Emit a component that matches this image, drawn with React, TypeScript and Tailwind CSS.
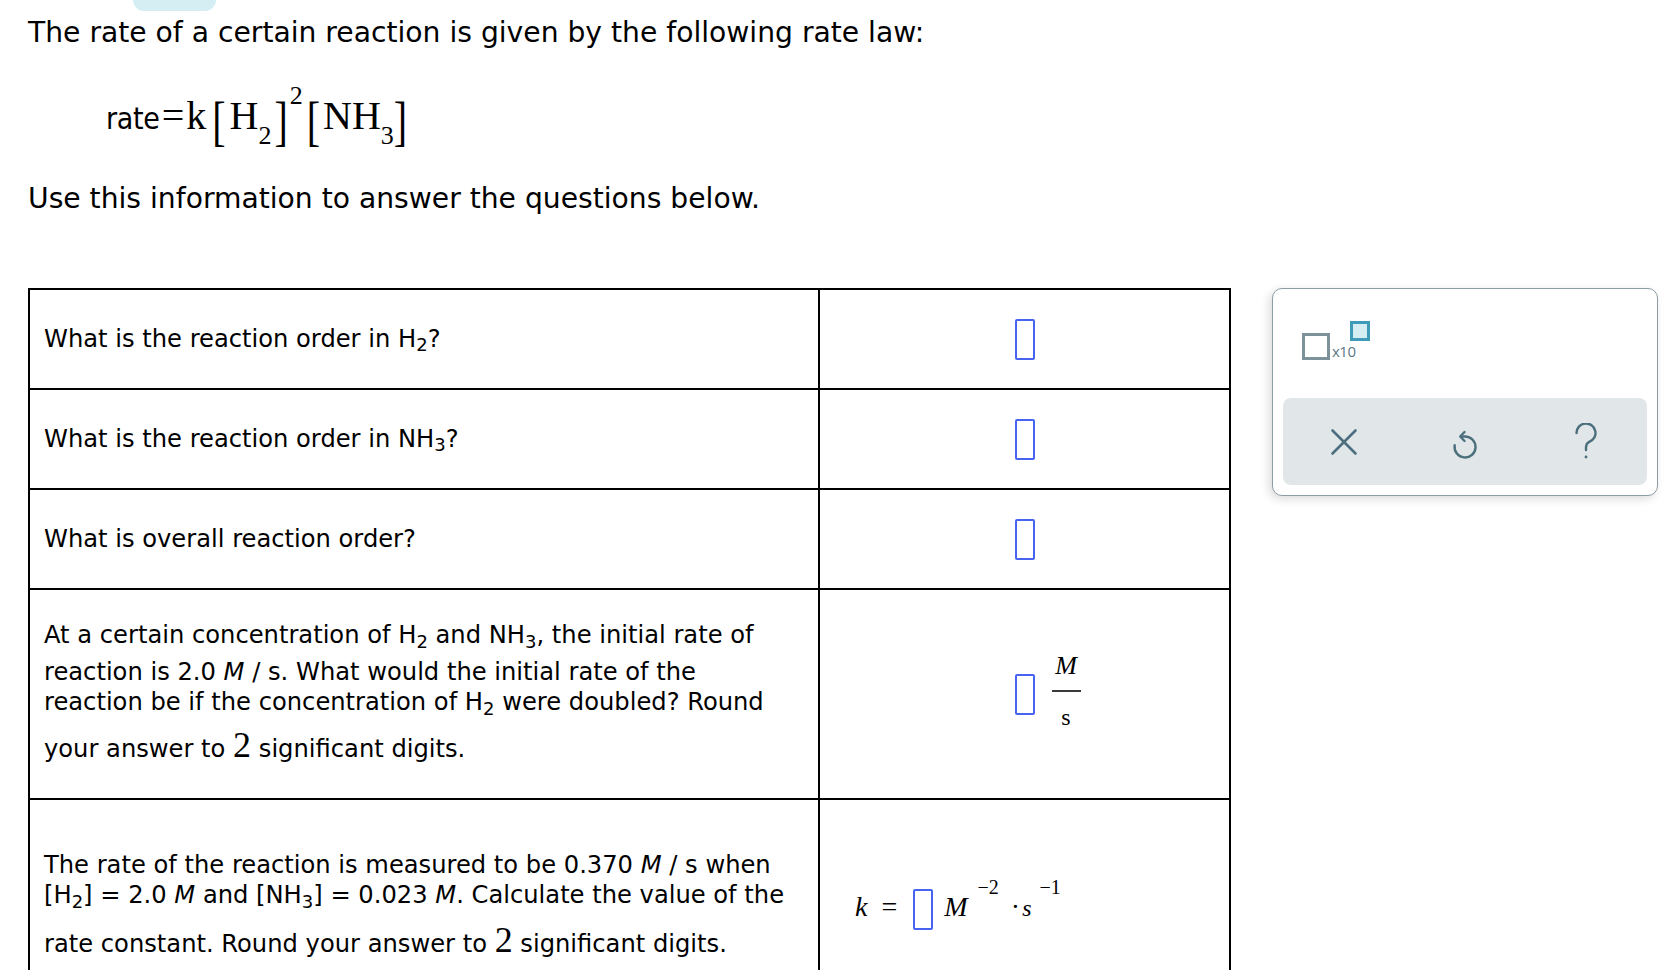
import type { ReactNode } from 'react'

const serif = "font-['Liberation_Serif','Times_New_Roman',serif]"

const AnswerBox = () => (
  <span className="inline-block h-[41px] w-[20px] rounded-[2px] border-2 border-[#4663f2] align-middle" />
)

const Bracket = ({ children }: { children: ReactNode }) => (
  <span className="inline-block translate-y-[6px] scale-y-[1.35] font-light">{children}</span>
)

const Sub = ({ children }: { children: ReactNode }) => <sub className="text-[18px]">{children}</sub>

const BigTwo = () => <span className={`${serif} text-[36px] leading-none`}>2</span>

function RateLaw() {
  return (
    <div className="h-[60px] whitespace-nowrap pl-[106px] leading-[60px]">
      <span className="font-['DejaVu_Sans_Condensed','DejaVu_Sans',sans-serif] text-[30px] tracking-[-0.3px]">rate</span>
      <span className={`${serif} text-[40px]`}>
        <span className="ml-[2px]">=</span>
        <span className="ml-[2px]">k</span>
        <span className="ml-[6px]">
          <Bracket>[</Bracket>
        </span>
        <span className="ml-[4px]">H</span>
        <span className="relative top-[15px] text-[26px]">2</span>
        <span className="ml-[3px]">
          <Bracket>]</Bracket>
        </span>
        <span className="relative -top-[25px] ml-[2px] text-[26px]">2</span>
        <span className="ml-[4px]">
          <Bracket>[</Bracket>
        </span>
        <span className="ml-[3px]">NH</span>
        <span className="relative top-[15px] text-[26px]">3</span>
        <Bracket>]</Bracket>
      </span>
    </div>
  )
}

function UndoIcon() {
  return (
    <svg width="26" height="36" viewBox="0 0 26 36" fill="none" stroke="#4b6f7d" strokeWidth="2.4" strokeLinecap="round" strokeLinejoin="round">
      <path d="M2.7 21.2 A10.5 10.5 0 1 0 13 12.5 H9" />
      <path d="M12.5 8 L8.2 12.5 L12.5 17" />
    </svg>
  )
}

function CloseIcon() {
  return (
    <svg width="28" height="28" viewBox="0 0 28 28" fill="none" stroke="#4b6f7d" strokeWidth="2.6" strokeLinecap="round">
      <path d="M2.5 2.5 L25.5 25.5" />
      <path d="M25.5 2.5 L2.5 25.5" />
    </svg>
  )
}

function HelpIcon() {
  return (
    <svg width="24" height="38" viewBox="0 0 24 38" fill="none" stroke="#4b6f7d" strokeWidth="2.4" strokeLinecap="round">
      <path d="M2.5 10 A9.5 9.5 0 1 1 15 19 C13 20 12 21.5 12 24.5 V27" />
      <circle cx="12" cy="34" r="1.4" fill="#4b6f7d" stroke="none" />
    </svg>
  )
}

function Keypad() {
  return (
    <div className="ml-[41px] flex h-[208px] w-[386px] flex-col rounded-[10px] border-[1.5px] border-[#8c9da5] bg-white p-[10px] shadow-[-3px_3px_10px_rgba(0,0,0,0.14)]">
      <div className="flex-1 pl-[19px] pt-[34px]">
        <div className="relative inline-flex items-end">
          <span className="inline-block h-[27px] w-[28px] border-[3px] border-[#7b929b]" />
          <span className="mb-[1px] ml-[2px] font-['Open_Sans',sans-serif] text-[15px] leading-none tracking-[-0.5px] text-[#5c7884]">
            x10
          </span>
          <span className="absolute left-[48px] -top-[12px] h-[20px] w-[20px] border-[3px] border-[#3f9cb8] bg-[#d5eef4]" />
        </div>
      </div>
      <div className="grid h-[87px] grid-cols-3 items-center justify-items-center rounded-[8px] bg-[#e1e6e9]">
        <CloseIcon />
        <UndoIcon />
        <HelpIcon />
      </div>
    </div>
  )
}

export default function App() {
  return (
    <div className="h-[970px] w-[1672px] overflow-hidden bg-white font-['DejaVu_Sans',Verdana,sans-serif] text-black">
      <div className="ml-[133px] h-[11px] w-[83px] rounded-b-[11px] bg-[#d5eef4]" />
      <div className="mt-[5px] pl-[28px] text-[28.2px] leading-[34px]">
        The rate of a certain reaction is given by the following rate law:
      </div>
      <div className="mt-[36px]">
        <RateLaw />
      </div>
      <div className="mt-[36px] pl-[28px] text-[28.2px] leading-[34px]">Use this information to answer the questions below.</div>

      <div className="mt-[72px] flex items-start pl-[28px]">
        <table className="w-[1201px] table-fixed border-collapse text-[24.2px]">
          <colgroup>
            <col className="w-[790px]" />
            <col className="w-[411px]" />
          </colgroup>
          <tbody>
            <tr className="h-[100px]">
              <td className="border-2 border-black px-[14px] align-middle">
                What is the reaction order in H<Sub>2</Sub>?
              </td>
              <td className="border-2 border-black text-center align-middle">
                <AnswerBox />
              </td>
            </tr>
            <tr className="h-[100px]">
              <td className="border-2 border-black px-[14px] align-middle">
                What is the reaction order in NH<Sub>3</Sub>?
              </td>
              <td className="border-2 border-black text-center align-middle">
                <AnswerBox />
              </td>
            </tr>
            <tr className="h-[100px]">
              <td className="border-2 border-black px-[14px] align-middle">What is overall reaction order?</td>
              <td className="border-2 border-black text-center align-middle">
                <AnswerBox />
              </td>
            </tr>
            <tr className="h-[210px]">
              <td className="border-2 border-black px-[14px] pt-[30px] align-top">
                <div className="leading-[30px]">
                  At a certain concentration of H<Sub>2</Sub> and NH<Sub>3</Sub>, the initial rate of
                </div>
                <div className="mt-[7px] leading-[30px]">
                  reaction is 2.0 <i>M</i> / s. What would the initial rate of the
                </div>
                <div className="leading-[30px]">
                  reaction be if the concentration of H<Sub>2</Sub> were doubled? Round
                </div>
                <div className="mt-[10px] leading-[30px]">
                  your answer to <BigTwo /> significant digits.
                </div>
              </td>
              <td className="border-2 border-black align-middle">
                <div className="grid grid-cols-[1fr_auto_1fr] items-center">
                  <span />
                  <AnswerBox />
                  <div className={`${serif} mb-[6px] ml-[17px] flex w-[29px] flex-col items-center`}>
                    <span className="h-[28px] text-[26px] italic leading-[28px]">M</span>
                    <span className="mt-[10px] h-[2px] w-[29px] bg-[#3a3a3a]" />
                    <span className="mt-[11px] h-[28px] text-[24px] leading-[28px]">s</span>
                  </div>
                </div>
              </td>
            </tr>
            <tr className="h-[240px]">
              <td className="border-2 border-black px-[14px] pt-[50px] align-top">
                <div className="leading-[30px]">
                  The rate of the reaction is measured to be 0.370 <i>M</i> / s when
                </div>
                <div className="leading-[30px]">
                  [H<Sub>2</Sub>] = 2.0 <i>M</i> and [NH<Sub>3</Sub>] = 0.023 <i>M</i>. Calculate the value of the
                </div>
                <div className="mt-[12px] leading-[30px]">
                  rate constant. Round your answer to <BigTwo /> significant digits.
                </div>
              </td>
              <td className="border-2 border-black pl-[35px] pt-[66px] align-top">
                <div className={`${serif} whitespace-nowrap text-[28px] leading-[42px]`}>
                  <i>k</i>
                  <span className="ml-[14px]">=</span>
                  <span className="ml-[16px]">
                    <AnswerBox />
                  </span>
                  <i className="ml-[11px]">M</i>
                  <span className="ml-[10px] align-[22px] text-[20px]">−2</span>
                  <span className="ml-[12px]">·</span>
                  <i className="ml-[2px] text-[24px]">s</i>
                  <span className="ml-[8px] align-[22px] text-[20px]">−1</span>
                </div>
              </td>
            </tr>
          </tbody>
        </table>
        <Keypad />
      </div>
    </div>
  )
}
